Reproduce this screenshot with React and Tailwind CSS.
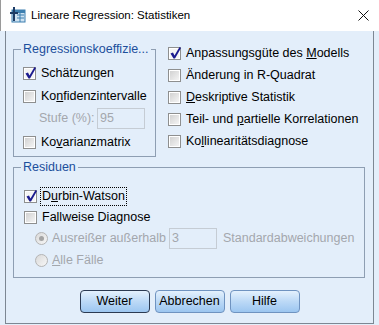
import React from "react";

const Check = ({ checked }) => (
  <span className="relative w-[13px] h-[13px] shrink-0 border border-[#8e8f8f] p-[1px] bg-white">
    <span className={`block w-full h-full ${checked ? "bg-[#f4f4f4]" : "bg-linear-to-br from-[#d2d2d2] to-[#f4f4f4]"}`} />
    {checked && (
      <svg className="absolute left-[0px] top-[-2px]" width="13" height="14" viewBox="0 0 13 14">
        <path d="M1.5 7.5 L4 6.5 L5.5 9.5 L10.5 1 L12 2 L6 12.5 L4.5 12.5 Z" fill="#1b1b8f" />
      </svg>
    )}
  </span>
);

const Radio = ({ on }) => (
  <span className="relative w-[13px] h-[13px] shrink-0 rounded-full border border-[#b4b4b4] bg-linear-to-br from-[#d9d9d9] to-[#f7f7f7] flex items-center justify-center">
    {on && <span className="w-[5px] h-[5px] rounded-full bg-[#a4a4a4]" />}
  </span>
);

const Row = ({ checked, children, h = "h-[22px]" }) => (
  <div className={`flex items-center ${h}`}>
    <Check checked={checked} />
    <span className="ml-[5px] whitespace-nowrap">{children}</span>
  </div>
);

const Btn = ({ children, main }) => (
  <button
    className={`w-[70px] h-[23px] rounded-[4px] border ${main ? "border-[#2b3a52]" : "border-[#6f93c0]"} bg-linear-to-b from-[#e4f1fd] via-[#bcd9f6] to-[#9cc6f0] text-[12.5px] leading-none text-black`}
  >
    {children}
  </button>
);

export default function App() {
  return (
    <div className="w-[379px] h-[325px] bg-[#e3eefa] font-['Liberation_Sans',Arial,sans-serif] text-[12.5px] text-black overflow-hidden">
      <div className="h-[31px] bg-white flex items-center border-l border-[#9a9a9a]">
        <svg className="ml-[8px]" width="17" height="17" viewBox="0 0 17 17">
          <rect x="3" y="3" width="13" height="12" fill="#cfe3f2" stroke="#3d7fb0" />
          <rect x="3" y="3" width="13" height="3" fill="#3d7fb0" />
          <path d="M8 8h7M8 11h7M11 6v9" stroke="#3d7fb0" strokeWidth="1" />
          <path d="M4 0h2v5h3v2H6v7H4V7H1V5h3z" fill="#1d3c66" />
        </svg>
        <span className="ml-[5px] text-[11.5px]">Lineare Regression: Statistiken</span>
        <svg className="ml-auto mr-[10px]" width="11" height="11" viewBox="0 0 11 11">
          <path d="M0.5 0.5L10.5 10.5M10.5 0.5L0.5 10.5" stroke="#111" strokeWidth="1" />
        </svg>
      </div>

      <div className="ml-[5px] w-[369px] h-[293px] border-x border-b border-[#7d8793] flex flex-col">
        <div className="flex mt-[11px]">
          <fieldset className="ml-[7px] w-[143px] h-[115px] border border-[#8e9eb2] pl-[9px]">
            <legend className="ml-[-2px] px-[2px] leading-[14px] text-[#1c4f9c]">Regressionskoeffizie...</legend>
            <div className="pt-[6px] flex flex-col">
              <Row checked h="h-[23px]">
                Schätzun<u>g</u>en
              </Row>
              <Row h="h-[23px]">
                Ko<u>n</u>fidenzintervalle
              </Row>
              <div className="flex items-center h-[21px] ml-[16px] text-[#a3a7ad]">
                <span className="w-[58px]">Stufe (%):</span>
                <span className="w-[48px] h-[21px] border border-[#c5ccd4] flex items-center pl-[2px]">95</span>
              </div>
              <div className="mt-[2px]">
                <Row h="h-[23px]">
                  Ko<u>v</u>arianzmatrix
                </Row>
              </div>
            </div>
          </fieldset>
          <div className="ml-[12px] flex flex-col">
            <Row checked>
              Anpassungsgüte des <u>M</u>odells
            </Row>
            <Row>Änderung in R-Quadrat</Row>
            <Row>
              <u>D</u>eskriptive Statistik
            </Row>
            <Row>
              Teil- und <u>p</u>artielle Korrelationen
            </Row>
            <Row>
              Ko<u>l</u>linearitätsdiagnose
            </Row>
          </div>
        </div>

        <fieldset className="mt-[3px] ml-[7px] w-[352px] h-[118px] border border-[#8e9eb2] pl-[10px]">
          <legend className="ml-[-3px] px-[2px] leading-[14px] text-[#1c4f9c]">Residuen</legend>
          <div className="pt-[11px] flex flex-col">
            <div className="flex items-center h-[22px]">
              <Check checked />
              <span className="ml-[3px] px-[1px] border border-dotted border-black leading-[17px]">
                D<u>u</u>rbin-Watson
              </span>
            </div>
            <Row h="h-[21px]">Fallweise Diagnose</Row>
            <div className="flex items-center h-[21px] ml-[11px] text-[#a3a7ad]">
              <Radio on />
              <span className="ml-[4px] w-[117px] whitespace-nowrap">Ausreißer außerhalb</span>
              <span className="w-[48px] h-[21px] border border-[#c5ccd4] flex items-center pl-[2px]">3</span>
              <span className="ml-[6px]">Standardabweichungen</span>
            </div>
            <div className="flex items-center h-[23px] ml-[11px] text-[#a3a7ad]">
              <Radio />
              <span className="ml-[4px]">
                <u>A</u>lle Fälle
              </span>
            </div>
          </div>
        </fieldset>

        <div className="mt-[12px] flex justify-center gap-[5px]">
          <Btn main>Weiter</Btn>
          <Btn>Abbrechen</Btn>
          <Btn>Hilfe</Btn>
        </div>
      </div>
    </div>
  );
}
